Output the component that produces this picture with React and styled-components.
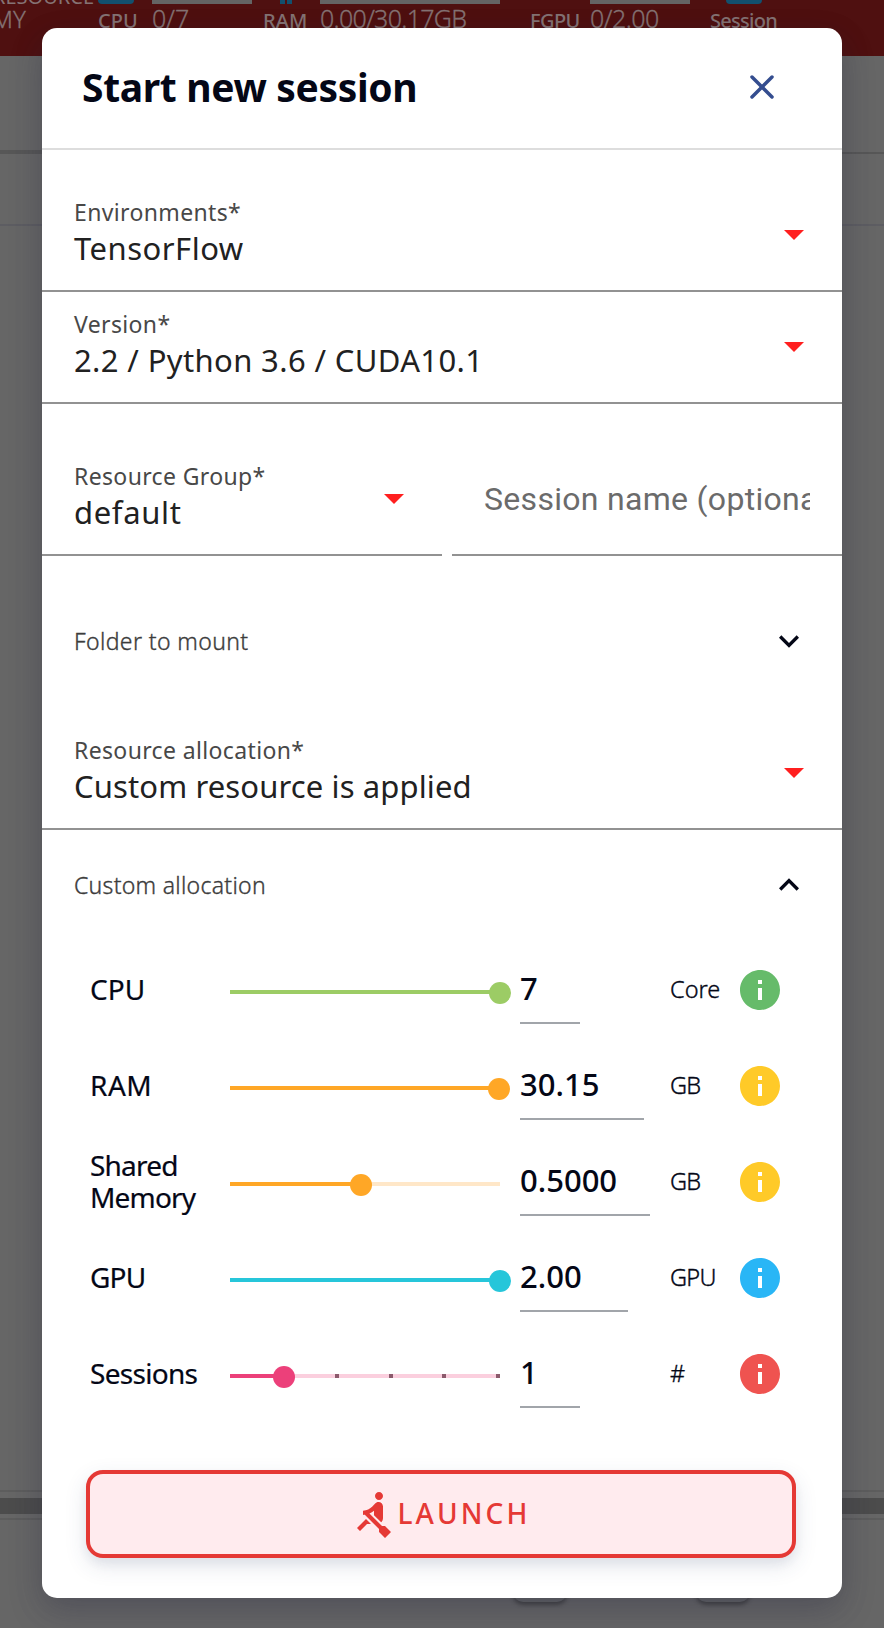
import React from 'react';
import styled, { createGlobalStyle } from 'styled-components';
import { X } from 'lucide-react';
import { MdExpandMore, MdExpandLess, MdInfo, MdRowing } from 'react-icons/md';

const GlobalStyle = createGlobalStyle`
  *, *::before, *::after { box-sizing: border-box; }
  body {
    margin: 0;
    background: #666;
    font-family: "Noto Sans", "Open Sans", sans-serif;
    color: #040716;
  }
`;

/* Dimmed page behind the dialog */

const Page = styled.div`
  position: relative;
  display: flex;
  flex-direction: column;
  height: 1628px;
  overflow: hidden;
  background: #666;
`;

const ResourceBar = styled.header`
  display: flex;
  flex: none;
  height: 56px;
  overflow: hidden;
  background: #4f1010;
  color: #857374;
`;

const Project = styled.div`
  width: 98px;
  margin-top: -15px;
  padding-right: 4px;
  display: flex;
  flex-direction: column;
  white-space: nowrap;
`;

const ProjectCaption = styled.span`
  align-self: flex-end;
  font-size: 20px;
  line-height: 24px;
`;

const ProjectName = styled.span`
  margin-left: -8px;
  font-size: 24px;
  font-weight: 300;
  line-height: 20px;
  -webkit-text-stroke: 0.3px;
`;

const GaugeLabel = styled.div`
  width: ${(p) => p.$width}px;
  flex: none;
  font-size: 20px;
  font-weight: 500;
  line-height: 24px;
  letter-spacing: ${(p) => p.$spacing || 0}px;
`;

const GaugeIcon = styled.div`
  display: flex;
  justify-content: space-between;
  width: ${(p) => p.$width}px;
  height: 4px;
  margin: 0 0 5px ${(p) => p.$indent || 0}px;
  border-radius: 0 0 ${(p) => (p.$pins ? 0 : 4)}px ${(p) => (p.$pins ? 0 : 4)}px;
  background: ${(p) => (p.$pins ? 'transparent' : '#12506e')};
`;

const Pin = styled.i`
  width: 5px;
  height: 4px;
  background: #12506e;
`;

const GaugeValue = styled.div`
  width: ${(p) => p.$width}px;
  flex: none;
  font-size: 25px;
  font-weight: 300;
  line-height: 28px;
  letter-spacing: ${(p) => p.$spacing || 0}px;
  white-space: nowrap;
  -webkit-text-stroke: 0.3px;
`;

const GaugeTrack = styled.div`
  width: ${(p) => p.$width}px;
  height: 4px;
  background: #646464;
`;

const TabStrip = styled.div`
  display: flex;
  align-items: flex-end;
  flex: none;
  height: 98px;
  border-bottom: 2px solid #575757;
`;

const ActiveTab = styled.div`
  width: 440px;
  height: 2px;
  background: #575757;
`;

const ListHeader = styled.div`
  flex: none;
  height: 72px;
  border-bottom: 2px solid #5d5d62;
`;

const ListBody = styled.div`
  flex: none;
  height: 1266px;
  border-bottom: 2px solid #5d5d5d;
`;

const ScrollTrack = styled.div`
  flex: none;
  height: 28px;
  padding: 6px 0 4px;
  border-bottom: 2px solid #5d5d5d;
`;

const ScrollThumb = styled.div`
  height: 16px;
  background: #4c4c4c;
`;

const Pager = styled.div`
  display: flex;
  gap: 129px;
  padding: 28px 0 0 513px;
`;

const PagerButton = styled.div`
  width: 54px;
  height: 54px;
  border-radius: 10px;
  background: #626364;
  box-shadow: 0 3px 4px rgba(0, 0, 0, 0.35);
`;

/* Dialog */

const Dialog = styled.section`
  position: absolute;
  top: 28px;
  left: 42px;
  width: 800px;
  height: 1570px;
  border-radius: 15px;
  background: #fff;
  box-shadow: 0 15px 35px rgba(50, 50, 93, 0.18), 0 8px 30px rgba(0, 0, 0, 0.14);
`;

const DialogHeader = styled.div`
  display: flex;
  align-items: center;
  justify-content: space-between;
  height: 122px;
  padding: 0 60px 3px 40px;
  border-bottom: 2px solid #ddd;
`;

const Title = styled.h1`
  margin: 0;
  font-size: 39px;
  font-weight: 700;
  line-height: 50px;
  letter-spacing: -0.34px;
`;

const CloseButton = styled.button`
  display: flex;
  padding: 0;
  border: 0;
  background: none;
  color: #344d8f;
`;

const DialogBody = styled.div`
  display: flex;
  flex-direction: column;
  padding-top: 30px;
`;

const FieldBox = styled.div`
  display: flex;
  align-items: flex-start;
  justify-content: space-between;
  width: ${(p) => (p.$width ? `${p.$width}px` : 'auto')};
  height: 112px;
  padding: 17px 38px 0 32px;
  border-bottom: 2px solid #929292;
`;

const FieldRow = styled.div`
  display: flex;
  justify-content: space-between;
  margin-top: 40px;
`;

const FieldText = styled.div`
  display: flex;
  flex-direction: column;
  gap: 1px;
  white-space: nowrap;
`;

const FieldLabel = styled.label`
  color: #484848;
  font-size: 23px;
  line-height: 30px;
  letter-spacing: 0.36px;
`;

const FieldValue = styled.span`
  color: #212121;
  font-size: 31px;
  line-height: 40px;
  letter-spacing: ${(p) => p.$spacing}px;
`;

const DropArrow = styled.i`
  margin-top: 33px;
  border: 10px solid transparent;
  border-top-color: #ff1f1f;
  border-bottom: 0;
`;

const NameField = styled.div`
  width: 390px;
  height: 112px;
  padding: 35px 32px 0;
  border-bottom: 2px solid #929292;
`;

const Placeholder = styled.div`
  overflow: hidden;
  color: #6b6b6b;
  font-family: Roboto, sans-serif;
  font-size: 32px;
  line-height: 40px;
  letter-spacing: 0.3px;
  white-space: nowrap;
`;

const SectionHeader = styled.div`
  display: flex;
  align-items: center;
  justify-content: space-between;
  height: ${(p) => p.$height}px;
  margin: ${(p) => p.$margin};
  padding: 0 33px 0 32px;
  color: #3c3c3c;
  font-size: 23px;
  font-weight: 300;
  letter-spacing: ${(p) => p.$spacing}px;
  -webkit-text-stroke: 0.35px;

  svg { color: #040716; }
`;

const ResourceRow = styled.div`
  display: grid;
  grid-template-columns: 140px 290px 150px 70px 40px;
  align-items: center;
  height: 96px;
  padding: 0 0 2px 48px;
`;

const ResourceName = styled.div`
  width: 125px;
  font-size: 28px;
  line-height: 32px;
  letter-spacing: ${(p) => p.$spacing || 0}px;
  -webkit-text-stroke: 0.2px;
`;

const Track = styled.div`
  position: relative;
  width: 270px;
  height: 4px;
  margin-top: 6px;
  background: ${(p) => p.$rail};
`;

const Fill = styled.div`
  height: 4px;
  background: ${(p) => p.$color};
`;

const Ticks = styled.div`
  position: absolute;
  top: 0;
  right: 0;
  display: flex;
  justify-content: space-between;
  width: 219px;

  i {
    width: 4px;
    height: 4px;
    background: #8c5a6c;
  }
`;

const Knob = styled.div`
  position: absolute;
  top: -8px;
  width: 22px;
  height: 22px;
  margin-left: -11px;
  border-radius: 50%;
  background: ${(p) => p.$color};
`;

const Amount = styled.div`
  width: ${(p) => p.$width}px;
  height: 70px;
  border-bottom: 2px solid #a1a5aa;
  font-size: 31px;
  font-weight: 500;
  line-height: 68px;
`;

const Unit = styled.div`
  font-size: 23.5px;
  font-weight: 300;
  line-height: 32px;
  letter-spacing: ${(p) => p.$spacing || 0}px;
  -webkit-text-stroke: 0.35px;
`;

const InfoButton = styled.button`
  display: flex;
  width: 48px;
  margin: 2px -4px 0;
  padding: 0;
  border: 0;
  background: none;
  color: ${(p) => p.$color};
`;

const LaunchButton = styled.button`
  display: flex;
  align-items: center;
  justify-content: center;
  height: 88px;
  margin: 48px 46px 0 44px;
  padding: 0 2px 0 0;
  border: 4px solid #e53935;
  border-radius: 17px;
  background: #ffebee;
  box-shadow: 0 8px 22px rgba(50, 60, 110, 0.13), 0 6px 10px rgba(50, 60, 110, 0.06);
  color: #e53935;
  font-family: inherit;
  font-size: 28px;
  font-weight: 500;
  line-height: 36px;
  letter-spacing: 3.1px;
`;

const LaunchText = styled.span`
  margin-top: -2px;
`;

const RESOURCES = [
  { name: 'CPU', color: '#9ccc65', rail: '#e1f0d0', at: 270, amount: '7', width: 60, unit: 'Core', info: '#66bb6a' },
  { name: 'RAM', spacing: 0.5, color: '#ffa726', rail: '#ffe7c8', at: 268.5, amount: '30.15', width: 124, unit: 'GB', unitSpacing: -0.7, info: '#ffca28' },
  { name: 'Shared Memory', spacing: -0.8, color: '#ffa726', rail: '#ffe7c8', at: 130.7, amount: '0.5000', width: 130, unit: 'GB', unitSpacing: -0.7, info: '#ffca28' },
  { name: 'GPU', spacing: -0.8, color: '#26c6da', rail: '#c9f1f6', at: 270, amount: '2.00', width: 108, unit: 'GPU', unitSpacing: -0.7, info: '#29b6f6' },
  { name: 'Sessions', spacing: -0.7, color: '#ec407a', rail: '#fbcfde', at: 54, ticks: 5, amount: '1', width: 60, unit: '#', info: '#ef5350' },
];

function SelectField({ label, value, spacing, width }) {
  return (
    <FieldBox $width={width}>
      <FieldText>
        <FieldLabel>{label}</FieldLabel>
        <FieldValue $spacing={spacing}>{value}</FieldValue>
      </FieldText>
      <DropArrow />
    </FieldBox>
  );
}

function Resource({ item }) {
  return (
    <ResourceRow>
      <ResourceName $spacing={item.spacing}>{item.name}</ResourceName>
      <Track $rail={item.rail}>
        <Fill $color={item.color} style={{ width: item.at }} />
        {item.ticks && (
          <Ticks>
            {Array.from({ length: item.ticks }, (_, i) => <i key={i} />)}
          </Ticks>
        )}
        <Knob $color={item.color} style={{ left: item.at }} />
      </Track>
      <Amount $width={item.width}>{item.amount}</Amount>
      <Unit $spacing={item.unitSpacing}>{item.unit}</Unit>
      <InfoButton $color={item.info} aria-label={`About ${item.name}`}>
        <MdInfo size={48} />
      </InfoButton>
    </ResourceRow>
  );
}

function Backdrop() {
  return (
    <>
      <ResourceBar>
        <Project>
          <ProjectCaption>RESOURCE</ProjectCaption>
          <ProjectName>MY</ProjectName>
        </Project>
        <GaugeLabel $width={54}><GaugeIcon $width={36} />CPU</GaugeLabel>
        <GaugeValue $width={111}><GaugeTrack $width={100} />0/7</GaugeValue>
        <GaugeLabel $width={57} $spacing={0.1}>
          <GaugeIcon $width={12} $indent={17} $pins><Pin /><Pin /></GaugeIcon>RAM
        </GaugeLabel>
        <GaugeValue $width={210} $spacing={-0.7}><GaugeTrack $width={180} />0.00/30.17GB</GaugeValue>
        <GaugeLabel $width={60} $spacing={-0.6}><GaugeIcon $width={0} />FGPU</GaugeLabel>
        <GaugeValue $width={120} $spacing={-0.5}><GaugeTrack $width={100} />0/2.00</GaugeValue>
        <GaugeLabel $width={80} $spacing={-0.7}><GaugeIcon $width={36} $indent={16} />Session</GaugeLabel>
      </ResourceBar>
      <TabStrip><ActiveTab /></TabStrip>
      <ListHeader />
      <ListBody />
      <ScrollTrack><ScrollThumb /></ScrollTrack>
      <Pager><PagerButton /><PagerButton /></Pager>
    </>
  );
}

export default function App() {
  return (
    <Page>
      <GlobalStyle />
      <Backdrop />
      <Dialog role="dialog">
        <DialogHeader>
          <Title>Start new session</Title>
          <CloseButton aria-label="Close"><X size={40} strokeWidth={2.1} /></CloseButton>
        </DialogHeader>
        <DialogBody>
          <SelectField label="Environments*" value="TensorFlow" spacing={0.5} />
          <SelectField label="Version*" value="2.2 / Python 3.6 / CUDA10.1" spacing={0.37} />
          <FieldRow>
            <SelectField label="Resource Group*" value="default" spacing={0.65} width={400} />
            <NameField><Placeholder>Session name (optional)</Placeholder></NameField>
          </FieldRow>
          <SectionHeader $height={96} $margin="37px 0 29px" $spacing={0.38}>
            Folder to mount<MdExpandMore size={40} />
          </SectionHeader>
          <SelectField label="Resource allocation*" value="Custom resource is applied" spacing={0.12} />
          <SectionHeader $height={110} $margin="0 0 2px" $spacing={0.28}>
            Custom allocation<MdExpandLess size={40} />
          </SectionHeader>
          {RESOURCES.map((item) => <Resource key={item.name} item={item} />)}
          <LaunchButton><MdRowing size={48} /><LaunchText>LAUNCH</LaunchText></LaunchButton>
        </DialogBody>
      </Dialog>
    </Page>
  );
}
